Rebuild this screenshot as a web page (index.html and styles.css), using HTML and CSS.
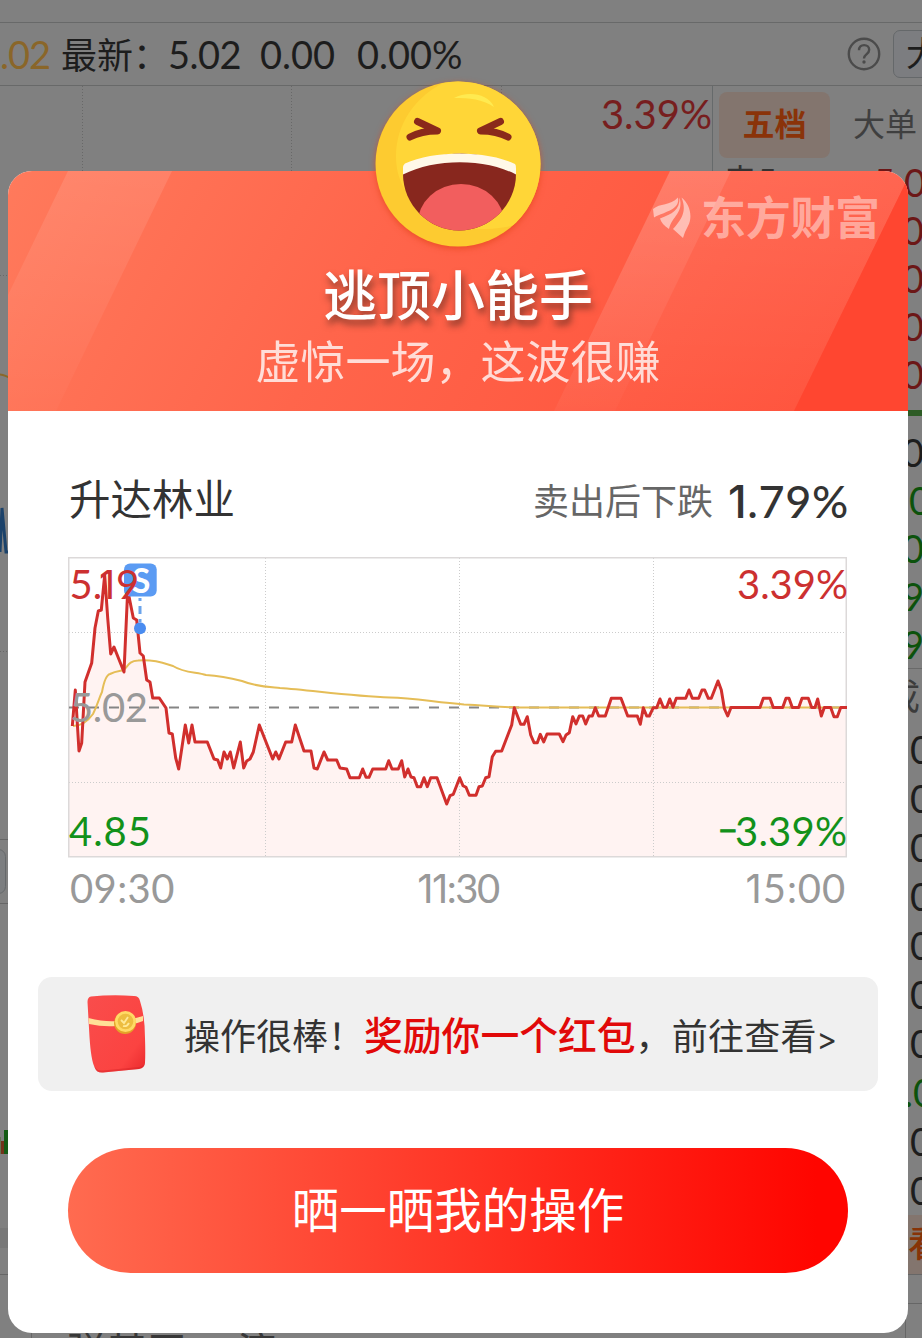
FILE: index.html
```html
<!DOCTYPE html>
<html lang="zh-CN">
<head>
<meta charset="utf-8">
<title>逃顶小能手</title>
<link rel="stylesheet" href="styles.css">
</head>
<body>
<div class="screen">
  <div class="page">
    <div class="quote-bar">
      <span class="avg">.02</span><span class="latest">最新：</span><span class="q1">5.02</span><span class="q2">0.00</span><span class="q3">0.00%</span>
      <svg class="help" viewBox="0 0 34 34"><circle cx="17" cy="17" r="15.2"/><path d="M12 13.3c0-3.3 2.2-5.200 5.100-5.200s5.100 1.900 5.100 4.600c0 2.600-1.500 3.600-3.100 4.900-1.400 1.100-2.100 2-2.100 4"/><circle class="dot" cx="17" cy="25" r="1.700"/></svg>
      <span class="select">大</span>
    </div>
    <div class="columns">
      <div class="back-chart">
        <svg viewBox="0 86 712 1252" width="712" height="1252">
          <g class="dots"><path d="M82.500 86V839M291.500 86V839M501.500 86V839M0 275.500H712M0 651.500H712"/></g>
          <path class="rule" d="M0 839.500H712M0 903.500H712M0 1274.500H712M31.500 1310V1338"/>
          <path class="band" d="M0 1228H712V1248H0z"/>
          <path class="avg-line" d="M0 374.500C4 374.500 5 376 10 378"/>
          <path class="blue-line" d="M0 552L2 508L6 552L9 552"/>
          <rect class="pill" x="-20" y="849.500" width="25.500" height="44" rx="7"/>
          <path fill="#73331b" d="M1 1141H4V1154H1z"/><path fill="#155b15" d="M4 1130H8V1154H4z"/><path fill="#667252" d="M0 1137H1V1154H0z"/>
        </svg>
        <span class="high">3.39%</span>
        <span class="ticker"><span>弹基天</span><span>演</span></span>
      </div>
      <div class="book">
        <div class="tabs"><span class="tab on">五档</span><span class="tab">大单</span></div>
        <div class="level red first"><span>卖5</span><span>5.0</span></div>
        <div class="level red">0</div>
        <div class="level red">0</div>
        <div class="level red">0</div>
        <div class="level red">0</div>
        <div class="ratio"></div>
        <div class="level">0</div>
        <div class="level green shift">0</div>
        <div class="level green">0</div>
        <div class="level green">9</div>
        <div class="level green">9</div>
        <div class="deal-head">成</div>
        <div class="deal">0</div>
        <div class="deal">0</div>
        <div class="deal">0</div>
        <div class="deal">0</div>
        <div class="deal">0</div>
        <div class="deal">0</div>
        <div class="deal">0</div>
        <div class="deal green">.0</div>
        <div class="deal">0</div>
        <div class="deal">0</div>
        <div class="more">看</div>
        <div class="foot"></div>
        <div class="foot-cell"></div>
      </div>
    </div>
  </div>

  <div class="modal">
    <div class="hero">
      <svg class="hero-bg" viewBox="8 171 900 240">
        <defs>
          <linearGradient id="base" x1="0" y1="0" x2="1" y2="0.150"><stop offset="0" stop-color="#ff7a5c"/><stop offset=".45" stop-color="#ff654b"/><stop offset="1" stop-color="#ff523b"/></linearGradient>
          <linearGradient id="sheen" x1="0" y1="0" x2="0" y2="1"><stop offset="0" stop-color="#fff" stop-opacity=".11"/><stop offset="1" stop-color="#fff" stop-opacity=".02"/></linearGradient>
        </defs>
        <path fill="url(#base)" d="M8 171H908V411H8z"/>
        <path fill="url(#sheen)" d="M68 171H172L56 411H8V295z"/>
        <path fill="url(#sheen)" d="M670 171H731L615 411H554z"/>
        <path fill="url(#sheen)" d="M670 171H908V178L794 411H554z"/>
        <path fill="#ff4630" d="M908 178V411H794z"/>
      </svg>
      <div class="brand">
        <svg viewBox="0 0 38 42"><path d="M0 12C7 6 17 9 25 .5C27 13 13 14 1 20.500z"/><path d="M26.500 .5C31 16 19 19 16 32C11 29 8 25 7 21.500C19 17 27 13 26.500 .5z"/><path d="M28.500 .5C37 7 40 20 35 29Q32 34 30 41L20 32C29 22 34 14 28.500 .5z"/></svg>
        <span>东方财富</span>
      </div>
      <h1>逃顶小能手</h1>
      <p>虚惊一场，这波很赚</p>
    </div>

    <div class="body">
      <div class="stock"><span class="name">升达林业</span><span class="after">卖出后下跌</span><b><span class="one">1</span>.79%</b></div>
      <svg class="chart" viewBox="68 557 780 301">
        <path class="area" d="M69 857V726H72.300L75.300 690 79 751 81.700 743 85 682 91.700 663 95 628 98.300 611 101.300 610 104.700 575 107.700 618 110.700 654 114 647 124 672 127.700 590 133.300 618 136.700 620 140 653 143.300 656 146.700 680 150 682 152.700 698H159.300L166 708 169 733 172.300 734 175.700 758 178.700 769 185.300 725 188.700 743 192 725 195 742H207.300L214 759 217.700 760 220.700 768 224 752 227.300 759 230.300 752 233.700 768 240.300 742 243.700 768 246.700 761 250 759 253.300 752 259.300 725 272.700 759 275.700 752 279 759 285.700 742H291.700L295.300 725 304 751H311L314 768 317.300 769 324 752 327.700 760H336.700L340 768 346.700 769 350 777.700H359.300L362.700 769 366 777.300H369L372.700 769H385.700L388.700 760.700 392 769H398.300L401.700 760.700 404.700 777 408 769 411 777 414 777.700 417.300 786.700H420.700L424 777.700 427.300 786.700 430.700 777.700H437L446.700 804 450 795.700 453.300 794.300 459.700 777.700 463 785.700 466 787.300 469.300 795.300H476L479 786.700 482.300 786 485.700 777.700 489 776.700 492.300 756.700 495.700 751.300 501.700 751 511.700 725 514.300 707.700 520.700 724.300H524L527.300 716.700 530.700 735 534 742.700H537.300L540.300 734.300 543.700 742 547 734H559.300L563 741.700 566 735 569.300 732.700 572.700 716.700 576 724 579.300 716H582.700L585.700 724 589 716H592.300L595.300 707.700 598.700 716H605.300L611.300 698.300H621L627.700 716H637.300L640.300 724.300 643.300 707.700 646.700 716H649.300L653.300 707.700H656.700L660 699 663.300 707.300H666.700L669.700 699 673 707.300 676.300 698.300H685.700L689 690 692.300 698.300H698.700L702 690H704.700L708.300 698.300H711.300L718 681 721.300 690 724.300 708.300 727.700 716 731 707.500H760L763.300 698.300H770L773.300 707.500H782.700L786 698.300H789L792.300 707.500H798.700L802 698.300H808.300L811.700 707.500H815L817.700 699 821.300 716 824.300 707.500H830.700L834 716.700H837.300L840.700 707.500H846V857z"/>
        <path class="grid" d="M265.500 558V857M459.500 558V857M653.500 558V857M69 632.500H846M69 782.500H846"/>
        <rect class="frame" x="68.750" y="557.750" width="777.500" height="299"/>
        <path class="mid" d="M69 707.500H846"/>
        <path class="mean" d="M73 726C82 726 88 721 93 714C98 704 99 698 102 692C104 681 106 675 110 674C116 671 121 671 124 670C128 666 129 661 138 660.500C156 659 166 664 173 666C184 673 196 672 206 675C221 676 234 679 242 681C257 687 269 687 280 688C310 690 350 696 390 697.500C413 698 434 702 464 704.500C486 705.500 500 707 520 707.500H846"/>
        <path class="price" d="M72.300 726L75.300 690 79 751 81.700 743 85 682 91.700 663 95 628 98.300 611 101.300 610 104.700 575 107.700 618 110.700 654 114 647 124 672 127.700 590 133.300 618 136.700 620 140 653 143.300 656 146.700 680 150 682 152.700 698H159.300L166 708 169 733 172.300 734 175.700 758 178.700 769 185.300 725 188.700 743 192 725 195 742H207.300L214 759 217.700 760 220.700 768 224 752 227.300 759 230.300 752 233.700 768 240.300 742 243.700 768 246.700 761 250 759 253.300 752 259.300 725 272.700 759 275.700 752 279 759 285.700 742H291.700L295.300 725 304 751H311L314 768 317.300 769 324 752 327.700 760H336.700L340 768 346.700 769 350 777.700H359.300L362.700 769 366 777.300H369L372.700 769H385.700L388.700 760.700 392 769H398.300L401.700 760.700 404.700 777 408 769 411 777 414 777.700 417.300 786.700H420.700L424 777.700 427.300 786.700 430.700 777.700H437L446.700 804 450 795.700 453.300 794.300 459.700 777.700 463 785.700 466 787.300 469.300 795.300H476L479 786.700 482.300 786 485.700 777.700 489 776.700 492.300 756.700 495.700 751.300 501.700 751 511.700 725 514.300 707.700 520.700 724.300H524L527.300 716.700 530.700 735 534 742.700H537.300L540.300 734.300 543.700 742 547 734H559.300L563 741.700 566 735 569.300 732.700 572.700 716.700 576 724 579.300 716H582.700L585.700 724 589 716H592.300L595.300 707.700 598.700 716H605.300L611.300 698.300H621L627.700 716H637.300L640.300 724.300 643.300 707.700 646.700 716H649.300L653.300 707.700H656.700L660 699 663.300 707.300H666.700L669.700 699 673 707.300 676.300 698.300H685.700L689 690 692.300 698.300H698.700L702 690H704.700L708.300 698.300H711.300L718 681 721.300 690 724.300 708.300 727.700 716 731 707.500H760L763.300 698.300H770L773.300 707.500H782.700L786 698.300H789L792.300 707.500H798.700L802 698.300H808.300L811.700 707.500H815L817.700 699 821.300 716 824.300 707.500H830.700L834 716.700H837.300L840.700 707.500H847"/>
        <g class="sell"><path d="M140 598V624"/><circle cx="140" cy="628.300" r="6"/><rect x="124" y="563.500" width="32.700" height="33" rx="6"/><text x="141" y="592.500" text-anchor="middle">S</text></g>
        <g class="labels">
          <text class="up" x="69.500" y="599">5.<tspan class="one" x="99">1</tspan><tspan x="116">9</tspan></text>
          <text class="up" x="737" y="599" textLength="111">3.39%</text>
          <text class="flat" x="70" y="722" textLength="78">5.02</text>
          <text class="down" x="69" y="846" textLength="82">4.85</text>
          <text class="down" x="735" y="846" textLength="112">3.39%</text>
          <text class="down minus" x="718" y="843">−</text>
        </g>
      </svg>
      <div class="axis"><span>09:30</span><span class="noon"><span class="one">11</span>:30</span><span><span class="one">1</span>5:00</span></div>

      <div class="reward">
        <svg class="packet" viewBox="0 0 64 82">
          <defs><linearGradient id="red" x1="0" y1="0" x2="1" y2="1"><stop offset="0" stop-color="#f94d4c"/><stop offset=".75" stop-color="#fb4341"/><stop offset="1" stop-color="#e9282c"/></linearGradient></defs>
          <path fill="url(#red)" d="M6 3.500Q27 1.500 49 3Q54 3 55 8Q60 23 60 45Q60.500 61 60 70Q59.500 75 54 76L18 79.500Q11 80 9.500 74Q6 67 4.500 44L2.500 9Q2.500 4 6 3.500z"/>
          <path fill="#cf1e23" opacity=".4" d="M9.500 73Q11 78 18 77.500L54 74Q59 73 60 70Q59.500 75 54 76L18 79.500Q11 80 9.500 74z"/>
          <path fill="#ffe096" d="M3.500 25Q20 29 31 28Q46 27 58 23V28Q46 33 31 33Q18 34 4 31z"/>
          <circle cx="40" cy="30" r="11" fill="#e4a328"/><circle cx="40.500" cy="28.500" r="10.500" fill="#ffda65"/><circle cx="40.500" cy="28.500" r="7.800" fill="#edbd40"/>
          <path d="M36 27l3 3 4-6M38 33q4 1 6-3" fill="none" stroke="#ffe997" stroke-width="1.800"/>
        </svg>
        <span class="praise">操作很棒！</span><em>奖励你一个红包</em><span class="go">，前往查看<span class="one">&gt;</span></span>
      </div>
      <div class="share">晒一晒我的操作</div>
    </div>

    <svg class="emoji" viewBox="0 0 166 166">
      <defs><clipPath id="mouth"><path d="M28 89.500V93C28 124 54 149.500 84 149.500C115 149.500 141 124 141 93V87Q84 57 28 89.500z"/></clipPath><clipPath id="face"><circle cx="83" cy="83" r="82.500"/></clipPath></defs>
      <circle cx="83" cy="83" r="82.500" fill="#fdcb30"/>
      <path clip-path="url(#face)" fill="#ffd637" d="M72 0C40 15 21 43 21 76C21 119 62 149 106 148C124 148 142 145 150 140L175 80L150 0z"/>
      <path fill="#ffea50" d="M79 17C92 10 113 12 119 26C107 18 95 17 79 17z"/>
      <g fill="none" stroke="#8a291b" stroke-width="7" stroke-linecap="round" stroke-linejoin="round"><path d="M42.500 40.500L62.500 50Q46 50 35 56"/><path d="M125.500 40.500L105.500 50Q122 50 133 56"/></g>
      <g clip-path="url(#mouth)"><path fill="#88271e" d="M20 60H150V152H20z"/><ellipse cx="86" cy="143" rx="43.500" ry="40" fill="#f25e5e"/></g>
      <path fill="#fff8e8" d="M28 86Q28 84 30 82.500C59 69 111 69 140 83Q141 84 141 87V93.500C110 77 60 77 28 93.500z"/>
    </svg>
  </div>
</div>
</body>
</html>
```
FILE: styles.css
```css
* { box-sizing: border-box; }
body { margin: 0; font-family: Lato, "Noto Sans CJK SC", sans-serif; }
.screen { position: relative; width: 922px; height: 1338px; overflow: hidden; background: #808080; }
.page { height: 1338px; padding-top: 22px; overflow: hidden; color: #1d1d1d; white-space: nowrap; }
.one { font-family: Inter, sans-serif; }

.quote-bar { display: flex; align-items: center; height: 64px; border-top: 1px solid #686969; border-bottom: 1px solid #686969; font-size: 38px; line-height: 62px; }
.quote-bar > * { flex: none; }
.avg { width: 61px; color: #8a6629; letter-spacing: -1px; }
.latest { width: 107px; margin-top: -2px; font-size: 36px; font-family: "Noto Sans CJK SC", sans-serif; }
.q1 { width: 92px; letter-spacing: -.5px; }
.q2 { width: 97px; }
.q3 { width: 490px; }
.help { width: 34px; height: 34px; fill: none; stroke: #4b4b4b; stroke-width: 2.400; }
.help .dot { fill: #4b4b4b; stroke: none; }
.select { width: 80px; height: 48px; margin-left: 12px; padding-left: 12px; border: 1px solid #65686a; border-radius: 7px; background: #7c7d80; font-size: 34px; line-height: 44px; }

.columns { display: grid; grid-template-columns: 712px 210px; height: 1252px; }
.back-chart { position: relative; overflow: hidden; }
.back-chart svg { display: block; }
.high { position: absolute; right: 0; top: 4px; color: #771e1e; font-size: 40px; line-height: 48px; }
.ticker { position: absolute; left: 67px; top: 1241px; display: flex; gap: 50px; font-size: 40px; line-height: 48px; color: #383838; }
.dots path { fill: none; stroke: #686868; stroke-dasharray: 1 2; }
.rule { fill: none; stroke: #666; }
.band { fill: #787878; }
.avg-line { fill: none; stroke: #89682a; stroke-width: 2; }
.blue-line { fill: none; stroke: #1b426a; stroke-width: 3; }
.pill { fill: #7c7e80; stroke: #66696b; }

.book { height: 1189px; margin-bottom: 63px; border-left: 1px solid #666a6b; font-size: 38px; }
.tabs { display: flex; gap: 23px; height: 72px; padding: 6px 0 0 6px; }
.tab { height: 66px; font-size: 32px; line-height: 64px; color: #3f3f3f; }
.tab.on { width: 111px; border-radius: 8px; background: #83756e; color: #8a3309; font-weight: 700; text-align: center; }
.level { height: 48px; padding-left: 189px; line-height: 48px; }
.level.first { display: flex; justify-content: space-between; width: 213px; padding-left: 10px; }
.level.first span:first-child { color: #333; font-size: 34px; line-height: 46px; }
.red { color: #6c1717; }
.green { color: #0c520c; }
.level.shift { padding-left: 196px; }
.ratio { height: 6px; margin: 12px 0 12px; background: #2d5b25; }
.deal-head { height: 57px; padding-left: 171px; border-top: 1px solid #696969; font-size: 36px; line-height: 54px; color: #3c3c3c; }
.deal { height: 49px; padding-left: 197px; line-height: 48px; }
.deal.green { padding-left: 191px; }
.more { height: 59px; padding-left: 195px; background: #83756e; color: #873307; font-size: 36px; line-height: 56px; font-weight: 500; }
.foot { height: 30px; border: solid #666; border-width: 1px 0; }
.foot-cell { height: 40px; margin-left: 192px; border-left: 1px solid #666; }

.modal { position: absolute; left: 8px; top: 171px; width: 900px; height: 1162px; border-radius: 24px; background: #fff; }
.hero { position: relative; height: 240px; padding-top: 90px; border-radius: 24px 24px 0 0; overflow: hidden; color: #fff; text-align: center; }
.hero-bg { position: absolute; inset: 0; width: 900px; height: 240px; }
.brand { position: absolute; left: 645px; top: 26px; display: flex; align-items: center; gap: 10px; height: 42px; color: rgba(255,255,255,.46); font-size: 45px; font-weight: 700; line-height: 42px; letter-spacing: -.3px; }
.brand svg { width: 38px; height: 42px; fill: rgba(255,255,255,.52); }
h1 { position: relative; margin: 0; font-size: 54px; line-height: 70px; font-weight: 500; text-shadow: 2px 5px 7px rgba(80,40,30,.7); }
p { position: relative; margin: 0; font-size: 45px; line-height: 62px; opacity: .78; }

.body { display: flex; flex-direction: column; }
.stock { display: flex; align-items: center; height: 60px; margin: 60px 60px 0 61px; color: #333; }
.name { flex: 1; font-size: 41.500px; line-height: 60px; margin-top: -4px; }
.after { font-size: 36px; color: #666; margin: -5px 15px 0 0; }
.stock b { width: 120px; font-size: 45px; font-weight: 500; letter-spacing: .6px; white-space: nowrap; }
.chart { width: 780px; height: 301px; margin: 26px 0 0 60px; overflow: visible; }
.area { fill: #fff3f2; }
.grid { fill: none; stroke: #ccc; stroke-dasharray: 1 2; }
.frame { fill: none; stroke: #dcd9d9; stroke-width: 1.500; }
.mid { fill: none; stroke: #858585; stroke-width: 2; stroke-dasharray: 10 10; }
.mean { fill: none; stroke: #e5bd57; stroke-width: 2; }
.price { fill: none; stroke: #d12f2d; stroke-width: 3; stroke-linejoin: round; }
.labels { font-size: 40px; }
.up { fill: #cc3030; }
.flat { fill: #999; }
.down { fill: #12911a; }
.minus { font-size: 34px; stroke: #12911a; stroke-width: .8; }
.sell { fill: #5b9bf3; }
.sell path { stroke: #6ba4eb; stroke-width: 3; stroke-dasharray: 3 5 8 5; }
.sell circle { fill: #4a8cf0; }
.sell text { fill: #fff; font: 700 34px Lato, sans-serif; }
.axis { display: grid; grid-template-columns: 1fr 1fr 1fr; margin: 5px 62px 0 62px; color: #999; font-size: 40px; line-height: 50px; }
.axis > span:first-child { letter-spacing: .4px; }
.noon { text-align: center; letter-spacing: -1.500px; }
.axis > span:last-child { text-align: right; letter-spacing: .9px; }
.reward { display: flex; align-items: center; height: 114px; margin: 63px 30px 0; padding-left: 47px; border-radius: 14px; background: #f0f0f0; color: #333; font-size: 36px; white-space: nowrap; }
.packet { width: 64px; height: 82px; margin-right: 35px; }
.praise { width: 180px; }
.reward em { margin-top: -2px; font-style: normal; font-size: 38.800px; font-weight: 500; color: #e10909; }
.go { letter-spacing: .2px; }
.go .one { font-size: 31px; }
.share { height: 125px; margin: 57px 60px 0; border-radius: 63px; background: linear-gradient(90deg, #ff6b50, #ff0500 96%); color: #fff; text-align: center; font-size: 47.500px; line-height: 124px; }
.emoji { position: absolute; left: 367px; top: -90.500px; width: 166px; height: 166px; filter: drop-shadow(0 2px 3px rgba(225,65,20,.65)); }
```
